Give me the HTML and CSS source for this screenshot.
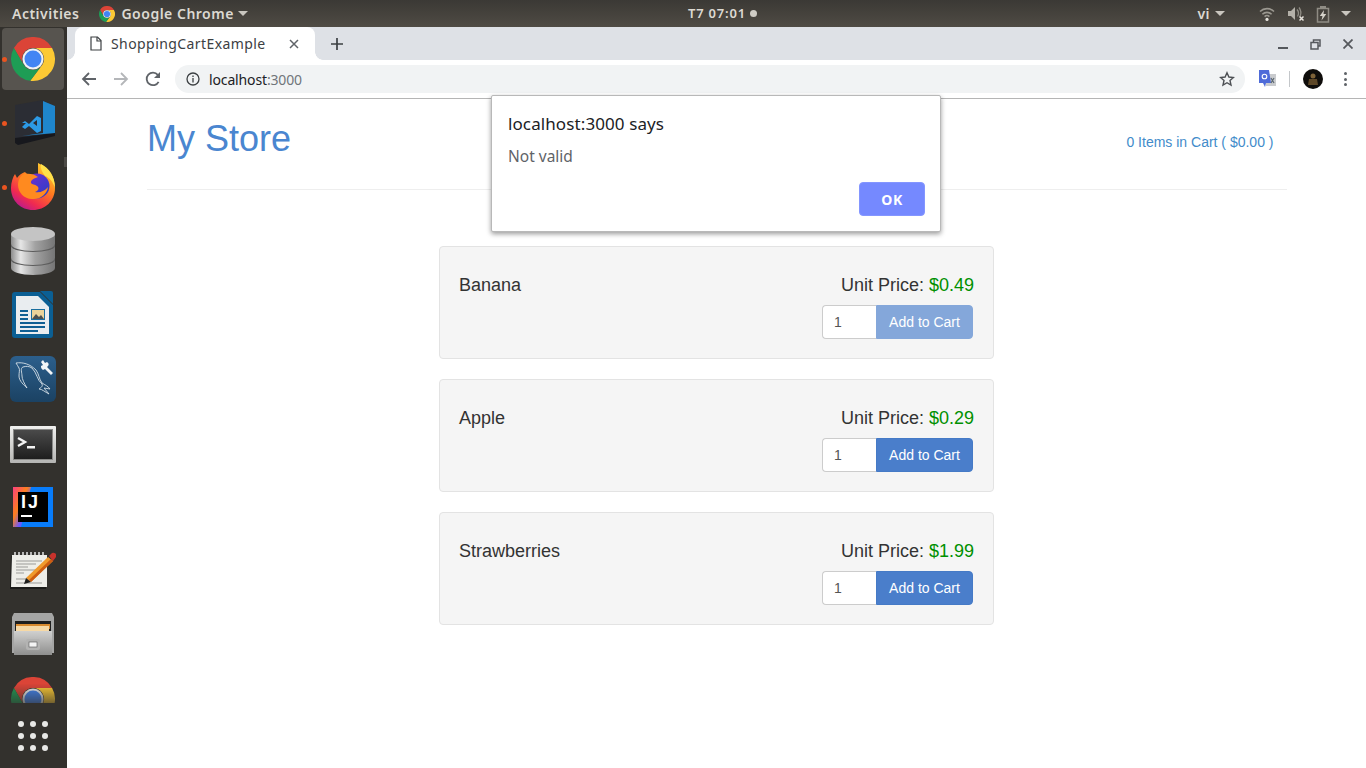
FILE: index.html
```html
<!DOCTYPE html>
<html lang="en">
<head>
<meta charset="utf-8">
<title>ShoppingCartExample</title>
<link rel="stylesheet" href="styles.css">
</head>
<body>
<svg class="defs" width="0" height="0" aria-hidden="true">
  <symbol id="chrome" viewBox="0 0 48 48">
    <path fill="#db4437" d="M3.2 12A24 24 0 0 1 44.8 12H24A12 12 0 0 0 13.6 30Z"/>
    <path fill="#fcc934" d="M44.8 12A24 24 0 0 1 21 47.8L34.4 30A12 12 0 0 0 24 12Z"/>
    <path fill="#1e9d55" d="M3.2 12A24 24 0 0 0 21 47.8L34.4 30A12 12 0 0 1 13.6 30Z"/>
    <circle cx="24" cy="24" r="11.5" fill="#f1f3f4"/>
    <circle cx="24" cy="24" r="9.3" fill="#4285f4"/>
  </symbol>
</svg>

<header class="topbar">
  <span class="top-item activities">Activities</span>
  <span class="top-item app-menu">
    <svg class="top-chrome" width="16" height="16"><use href="#chrome"/></svg>
    Google Chrome
    <i class="caret caret-app"></i>
  </span>
  <span class="clock">T7 07:01<i class="clock-dot"></i></span>
  <span class="tray">
    <span class="top-item lang">vi</span><i class="caret caret-lang"></i>
    <svg class="tray-icon wifi" width="16" height="16" viewBox="0 0 16 16" fill="none" stroke="#9b9890" stroke-width="1.6">
      <path d="M1 5.5a10 10 0 0 1 14 0"/><path d="M3.4 8.2a6.6 6.6 0 0 1 9.2 0"/><path d="M5.6 10.6a3.4 3.4 0 0 1 4.8 0"/>
      <circle cx="8" cy="13.4" r="1.6" fill="#e6e3dc" stroke="none"/>
    </svg>
    <svg class="tray-icon speaker" width="18" height="16" viewBox="0 0 18 16">
      <path fill="#b4b1a9" d="M1 5h3l4-4v13l-4-4H1z"/>
      <path fill="none" stroke="#8f8c84" stroke-width="1.3" d="M10 3.5a6 6 0 0 1 .5 7M12 1.5a9 9 0 0 1 1 9"/>
      <path stroke="#e6e3dc" stroke-width="1.5" d="M12.5 10.5l4 4M16.5 10.5l-4 4"/>
    </svg>
    <svg class="tray-icon battery" width="14" height="18" viewBox="0 0 14 18">
      <path fill="none" stroke="#8f8c84" stroke-width="1.5" d="M1.5 3.5h11v13.500h-11z"/>
      <path fill="#8f8c84" d="M4 1h6v2.500H4z"/>
      <path fill="#d5d2ca" d="M8 5L3.800 11H6.500L5.500 15.500 10.300 9H7.500z"/>
    </svg>
    <i class="caret caret-end"></i>
  </span>
</header>

<div class="desktop">
  <nav class="dock">
    <div class="dock-list">
      <div class="dock-item active running">
        <svg width="44" height="44"><use href="#chrome"/></svg>
      </div>
      <div class="dock-item running">
        <svg width="46" height="46" viewBox="0 0 46 46">
          <path fill="#2b2d34" d="M5 5 33 0l12 6v27L8 45l-3-3z"/>
          <path fill="#17181d" d="M5 38l40-5v3L8 45l-3-2z"/>
          <path fill="#1f86cc" d="M33 1l12 5v27l-33 3 21-3z"/>
          <path fill="#2c9ae6" d="M12 23l3-2 4 3 8-8 4 2v13l-4 2-8-7-4 3-3-2 4-4zM23 23l4 3v-6z"/>
        </svg>
      </div>
      <div class="dock-item running">
        <svg width="46" height="48" viewBox="0 0 46 48">
          <defs>
            <linearGradient id="fx" x1="0.800" y1="0.050" x2="0.200" y2="1">
              <stop offset="0" stop-color="#ffcf30"/><stop offset=".4" stop-color="#ff7a1f"/><stop offset=".75" stop-color="#f02a50"/><stop offset="1" stop-color="#b1189a"/>
            </linearGradient>
            <linearGradient id="fxb" x1="0" y1="0" x2="1" y2="1">
              <stop offset="0" stop-color="#7a2bd0"/><stop offset="1" stop-color="#2440c8"/>
            </linearGradient>
          </defs>
          <path fill="url(#fx)" d="M28 0c9 4 17 12 17 25 0 13-10 22-22 22S1 38 1 25c0-6 2-11 4-14l2 4c2-3 5-5 8-6 2 3 8 4 13 6z"/>
          <circle cx="27" cy="23" r="12.500" fill="url(#fxb)"/>
          <path fill="#ff8a1f" d="M14 11c5-1 11 0 14 3-3 1-8 3-7 6 1 2 4 1 6 3 3 2 1 5-2 6 5 1 10-1 13-5-1 7-8 13-16 12-8 0-14-7-14-14 0-5 2-9 6-11z"/>
          <path fill="#ffe04a" d="M31 1c8 4 14 12 14 24-2-6-5-10-10-12-3-4-5-8-4-12z"/>
        </svg>
      </div>
      <div class="dock-item">
        <svg width="46" height="50" viewBox="0 0 46 50">
          <defs>
            <linearGradient id="db" x1="0" x2="1" y1="0" y2="0">
              <stop offset="0" stop-color="#8d8d8d"/><stop offset=".22" stop-color="#e6e6e6"/><stop offset=".55" stop-color="#a2a2a2"/><stop offset="1" stop-color="#757575"/>
            </linearGradient>
          </defs>
          <path fill="url(#db)" d="M1 34h44v8c0 4-10 7-22 7S1 46 1 42z"/>
          <ellipse cx="23" cy="34" rx="22" ry="6" fill="#5d5d5d"/>
          <path fill="url(#db)" d="M1 20h44v12c0 4-10 7-22 7S1 36 1 32z"/>
          <ellipse cx="23" cy="20" rx="22" ry="6" fill="#5d5d5d"/>
          <path fill="url(#db)" d="M1 8h44v10c0 4-10 7-22 7S1 22 1 18z"/>
          <ellipse cx="23" cy="8" rx="22" ry="7" fill="#c4c4c4"/>
        </svg>
      </div>
      <div class="dock-item">
        <svg width="42" height="48" viewBox="0 0 42 48">
          <path fill="#0b5f94" d="M3 1h25l13 13v30a3 3 0 0 1-3 3H3a3 3 0 0 1-3-3V4a3 3 0 0 1 3-3z"/>
          <path fill="#e9edf0" d="M4 5h22l11 11v27H4z"/>
          <path fill="#0b5f94" d="M28 0h11a2 2 0 0 1 2 2v11z"/>
          <path fill="#0f5f93" d="M8 19h8v2H8zM8 23h8v2H8zM8 27h8v2H8zM8 31h25v2H8zM8 35h25v2H8zM8 39h18v2H8z"/>
          <path fill="#1a6e9e" d="M19 18h14v11H19z"/>
          <path fill="#e9d39a" d="M20 19h12v9H20z"/>
          <path fill="#4a4f4f" d="M20 28l4-5 3 3 2-2 3 4z"/>
        </svg>
      </div>
      <div class="dock-item">
        <svg width="46" height="46" viewBox="0 0 46 46">
          <defs>
            <linearGradient id="wb" x1="0" x2="0" y1="0" y2="1">
              <stop offset="0" stop-color="#2c5f8c"/><stop offset="1" stop-color="#1b4263"/>
            </linearGradient>
          </defs>
          <rect width="46" height="46" rx="6" fill="url(#wb)"/>
          <path fill="none" stroke="#d5e0e8" stroke-width=".9" d="M6 7c7-1 14 1 20 7 3 4 3 9 6 13 3 2 6 3 8 6l-6-1 5 6c-4-2-7-5-10-5 2-2 4-2 3-5-5-4-5-11-10-16-3-2-6-2-9-1-3 1-1 6-1 9 0 3 2 7 5 12-3-3-8-7-8-12 0-4 1-6 0-8-1-2-2-3-3-5z"/>
          <path fill="#f2f5f7" d="M33 4l2 3 2-1c2 1 2 3 1 4l-1 1 6 6-2 2-6-6-2 1c-2-1-2-3-2-4l2-1-2-3z"/>
        </svg>
      </div>
      <div class="dock-item">
        <svg class="term-icon" width="46" height="37" viewBox="0 0 46 37">
          <defs>
            <linearGradient id="tb" x1="0" x2="0" y1="0" y2="1">
              <stop offset="0" stop-color="#f0f0ee"/><stop offset="1" stop-color="#b5b5b3"/>
            </linearGradient>
            <linearGradient id="ts" x1="0" x2="0" y1="0" y2="1">
              <stop offset="0" stop-color="#4a4a4a"/><stop offset="1" stop-color="#1e1e1e"/>
            </linearGradient>
          </defs>
          <rect width="46" height="37" rx="1" fill="url(#tb)"/>
          <rect x="3" y="3" width="40" height="31" fill="#8a8a88"/>
          <rect x="4" y="4" width="38" height="29" fill="url(#ts)"/>
          <path fill="none" stroke="#f4f4f4" stroke-width="2.400" d="M8 12l7 4-7 4"/>
          <path fill="#f4f4f4" d="M17 20h8v2.500h-8z"/>
        </svg>
      </div>
      <div class="dock-item">
        <svg width="40" height="40" viewBox="0 0 40 40">
          <defs>
            <linearGradient id="ij" x1="0" y1="0" x2="1" y2="1">
              <stop offset="0" stop-color="#fc3f7f"/><stop offset=".4" stop-color="#fc801d"/><stop offset=".65" stop-color="#6b57ff"/><stop offset="1" stop-color="#087cfa"/>
            </linearGradient>
          </defs>
          <rect width="40" height="40" fill="#087cfa"/>
          <path fill="url(#ij)" d="M0 0h18L8 40H0z"/>
          <rect x="5" y="5" width="30" height="30" fill="#000"/>
          <text class="ij-text" x="8" y="21">IJ</text>
          <rect x="8" y="28" width="11" height="2" fill="#fff"/>
        </svg>
      </div>
      <div class="dock-item">
        <svg width="46" height="38" viewBox="0 0 46 38">
          <path fill="#1c1c1a" d="M1 4h35v33H0z"/>
          <path fill="#eeeee9" d="M2 3h35v32H1z"/>
          <g fill="none" stroke="#e6e6e6" stroke-width="1.500">
            <path d="M5 3V0M9 3V0M13 3V0M17 3V0M21 3V0M25 3V0M29 3V0M33 3V0"/>
          </g>
          <path stroke="#9b9b98" stroke-width="1" d="M6 9h26M6 12h20M6 15h12M6 18h26M6 21h8M6 27h14M6 31h26"/>
          <path fill="#f09a2c" d="M38 5l5 4-22 21-5-4z"/>
          <path fill="#ce5d12" d="M43 9l-22 21-2-2 22-21z"/>
          <path fill="#c8322c" d="M39 4l3-3a3 3 0 0 1 4 4l-3 4z"/>
          <path fill="#1d1d1b" d="M16 26l5 4-7 2z"/>
        </svg>
      </div>
      <div class="dock-item">
        <svg width="42" height="44" viewBox="0 0 42 44">
          <defs>
            <linearGradient id="cab" x1="0" x2="0" y1="0" y2="1">
              <stop offset="0" stop-color="#d0d0cf"/><stop offset="1" stop-color="#8f8f8e"/>
            </linearGradient>
          </defs>
          <path fill="#a5a5a4" d="M2 0h38l2 4v36H0V4z"/>
          <rect x="3" y="8" width="36" height="10" fill="#1f1f1e"/>
          <rect x="4" y="11" width="34" height="5" fill="#d98a2e"/>
          <rect x="4" y="13" width="33" height="5" fill="#f7d9a5"/>
          <path fill="url(#cab)" d="M2 18h38v24H2z"/>
          <rect x="14" y="26" width="14" height="11" rx="2" fill="#b3b3b2"/>
          <rect x="17" y="29" width="8" height="5" fill="#f4f4f4" stroke="#555" stroke-width=".6"/>
        </svg>
      </div>
      <div class="dock-item">
        <svg class="faded" width="44" height="44"><use href="#chrome"/></svg>
      </div>
    </div>
    <div class="apps-grid">
      <i></i><i></i><i></i><i></i><i></i><i></i><i></i><i></i><i></i>
    </div>
    <i class="dock-hint"></i>
  </nav>

  <main class="browser">
    <div class="tabstrip">
      <div class="tab">
        <svg class="tab-file" width="12" height="15" viewBox="0 0 12 15" fill="none" stroke="#3c4043" stroke-width="1.200">
          <path d="M1 1h6.500L11 4.500V14H1z"/><path d="M7 1v4h4"/>
        </svg>
        <span class="tab-title">ShoppingCartExample</span>
        <svg class="tab-close" width="10" height="10" viewBox="0 0 10 10" stroke="#5f6368" stroke-width="1.500"><path d="M1 1l8 8M9 1l-8 8"/></svg>
      </div>
      <svg class="new-tab" width="12" height="12" viewBox="0 0 12 12" stroke="#3c4043" stroke-width="1.700"><path d="M6 0v12M0 6h12"/></svg>
      <div class="window-controls">
        <svg width="10" height="10" viewBox="0 0 10 10"><path fill="#55585d" d="M0 8h10v2H0z"/></svg>
        <svg width="11" height="11" viewBox="0 0 11 11" fill="none" stroke="#55585d" stroke-width="1.500"><path d="M3.500 3V1h6.500v6H8"/><path d="M1 3.500h7v6.500H1z"/></svg>
        <svg width="10" height="10" viewBox="0 0 10 10" stroke="#55585d" stroke-width="1.800"><path d="M.5.5l9 9M9.500.5l-9 9"/></svg>
      </div>
    </div>

    <div class="toolbar">
      <svg class="nav-icon" width="16" height="16" viewBox="0 0 16 16" fill="none" stroke="#5f6368" stroke-width="1.800"><path d="M15 8H2M8 2L2 8l6 6"/></svg>
      <svg class="nav-icon" width="16" height="16" viewBox="0 0 16 16" fill="none" stroke="#b4b6b9" stroke-width="1.800"><path d="M1 8h13M8 2l6 6-6 6"/></svg>
      <svg class="nav-icon reload" width="16" height="16" viewBox="0 0 16 16" fill="none" stroke="#5f6368" stroke-width="1.800"><path d="M13.600 10.800A6.300 6.300 0 1 1 12.800 3.800"/><path fill="#5f6368" stroke="none" d="M15 1v6H9z"/></svg>
      <div class="omnibox">
        <svg class="info-icon" width="14" height="14" viewBox="0 0 14 14" fill="none" stroke="#3c4043" stroke-width="1.300"><circle cx="7" cy="7" r="6"/><path d="M7 6v4.500M7 3.400v1.500"/></svg>
        <span class="url">localhost<span class="url-port">:3000</span></span>
        <svg class="star" width="16" height="16" viewBox="0 0 16 16" fill="none" stroke="#4d5054" stroke-width="1.400"><path d="M8 1.800l1.900 4.200 4.500.5-3.400 3 1 4.500L8 11.700 4 14l1-4.500-3.400-3 4.500-.5z"/></svg>
      </div>
      <svg class="translate" width="17" height="18" viewBox="0 0 17 18">
        <path fill="#c9cbce" d="M7 4h10v12H7z"/>
        <path fill="#4f6bd8" d="M0 0h10l2 13H7l-1 4-2-4H0z"/>
        <circle cx="5.500" cy="6.500" r="2.300" fill="none" stroke="#fff" stroke-width="1.100"/>
        <path stroke="#5b6770" stroke-width="1.200" d="M12 8l3 5M15 8l-3 5"/>
      </svg>
      <i class="tool-sep"></i>
      <svg class="avatar" width="20" height="20" viewBox="0 0 20 20">
        <circle cx="10" cy="10" r="10" fill="#0f0d0b"/>
        <circle cx="10" cy="7" r="2.500" fill="#7d6238"/>
        <path fill="#5d4727" d="M6 10h8l1 6H5z"/>
      </svg>
      <span class="kebab"><i></i><i></i><i></i></span>
    </div>

    <div class="page">
      <div class="container">
        <div class="store-header">
          <h1 class="store-title">My Store</h1>
          <a class="cart-link">0 Items in Cart ( $0.00 )</a>
        </div>
        <div class="product-list">
          <section class="well">
            <span class="product-name">Banana</span>
            <div class="product-buy">
              <div class="price">Unit Price: <span class="price-value">$0.49</span></div>
              <div class="input-group">
                <input class="qty" type="text" value="1">
                <button class="add-btn disabled">Add to Cart</button>
              </div>
            </div>
          </section>
          <section class="well">
            <span class="product-name">Apple</span>
            <div class="product-buy">
              <div class="price">Unit Price: <span class="price-value">$0.29</span></div>
              <div class="input-group">
                <input class="qty" type="text" value="1">
                <button class="add-btn">Add to Cart</button>
              </div>
            </div>
          </section>
          <section class="well">
            <span class="product-name">Strawberries</span>
            <div class="product-buy">
              <div class="price">Unit Price: <span class="price-value">$1.99</span></div>
              <div class="input-group">
                <input class="qty" type="text" value="1">
                <button class="add-btn">Add to Cart</button>
              </div>
            </div>
          </section>
        </div>
      </div>
    </div>

    <div class="alert-dialog">
      <div class="alert-title">localhost:3000 says</div>
      <div class="alert-message">Not valid</div>
      <div class="alert-actions"><button class="alert-ok">OK</button></div>
    </div>
  </main>
</div>
</body>
</html>
```
FILE: styles.css
```css
* { box-sizing: border-box; }
html, body { margin: 0; padding: 0; }
body {
  width: 1366px;
  height: 768px;
  overflow: hidden;
  display: flex;
  flex-direction: column;
  font-family: "Liberation Sans", Arial, sans-serif;
  background: #fff;
}
.defs { position: absolute; }
i { display: block; font-style: normal; }
svg { display: block; flex: none; }

/* top bar */
.topbar {
  height: 27px;
  flex: none;
  display: flex;
  align-items: center;
  position: relative;
  background: linear-gradient(#3b3935, #4f4b44);
  color: #dcd9d2;
  font-family: "Noto Sans", sans-serif;
  font-weight: 600;
  font-size: 14px;
  letter-spacing: .5px;
  padding-left: 12px;
}
.top-item { display: flex; align-items: center; white-space: nowrap; }
.activities { margin-right: 20px; }
.top-chrome { margin-right: 6px; }
.caret {
  width: 0; height: 0;
  border-left: 5px solid transparent;
  border-right: 5px solid transparent;
  border-top: 5px solid #c9c6bf;
  margin-left: 6px;
}
.caret-app { margin-left: 4px; }
.clock {
  position: absolute;
  left: 688px;
  top: 4px;
  display: flex;
  align-items: center;
  font-size: 13px;
  line-height: 18px;
  letter-spacing: .8px;
}
.clock-dot { width: 7px; height: 7px; border-radius: 50%; background: #cfccc5; margin-left: 4px; }
.tray { margin-left: auto; display: flex; align-items: center; padding-right: 15px; }
.caret-lang { margin-left: 5px; margin-right: 34px; }
.tray-icon { margin-right: 12px; }
.wifi { margin-right: 12px; }
.speaker { margin-right: 11px; }
.battery { margin-right: 11px; }
.caret-end { margin-left: 0; }

/* desktop */
.desktop { flex: 1; display: flex; min-height: 0; }

/* dock */
.dock {
  width: 67px;
  flex: none;
  background: #33312d;
  display: flex;
  flex-direction: column;
  overflow: hidden;
  position: relative;
}
.dock-hint {
  position: absolute;
  right: 0;
  top: 130px;
  width: 3px;
  height: 10px;
  background: #4c4a46;
}
.dock-list { height: 676px; overflow: hidden; flex: none; }
.dock-item {
  height: 64px;
  width: 62px;
  margin-left: 2px;
  display: flex;
  align-items: center;
  justify-content: center;
  border-radius: 4px;
  position: relative;
}
.dock-item.active { background: #57544f; margin-top: 1px; height: 62px; margin-bottom: 1px; }
.dock-item.running::before {
  content: "";
  position: absolute;
  left: 0;
  top: 50%;
  width: 5px;
  height: 5px;
  margin-top: -2px;
  border-radius: 50%;
  background: #e95420;
}
.term-icon { margin-top: 2px; }
.faded {
  -webkit-mask-image: linear-gradient(rgba(0, 0, 0, 1) 15%, rgba(0, 0, 0, .35) 58%);
  mask-image: linear-gradient(rgba(0, 0, 0, 1) 15%, rgba(0, 0, 0, .35) 58%);
}
.ij-text { font-family: "Liberation Sans", sans-serif; font-weight: 700; font-size: 18px; letter-spacing: 2px; fill: #fff; }
.apps-grid {
  display: grid;
  grid-template-columns: repeat(3, 6px);
  gap: 6px;
  margin: 18px 0 0 18px;
}
.apps-grid i { width: 6px; height: 6px; border-radius: 50%; background: #e8e8e6; }

/* browser */
.browser { flex: 1; min-width: 0; display: flex; flex-direction: column; position: relative; }
.tabstrip {
  height: 33px;
  flex: none;
  background: #dee1e6;
  display: flex;
  align-items: flex-start;
  padding-left: 8px;
}
.tab {
  width: 240px;
  height: 33px;
  background: #fff;
  border-radius: 8px 8px 0 0;
  display: flex;
  align-items: center;
  padding: 0 16px 0 15px;
  position: relative;
}
.tab::before, .tab::after {
  content: "";
  position: absolute;
  bottom: 0;
  width: 8px;
  height: 8px;
}
.tab::before { left: -8px; background: radial-gradient(circle at 0 0, transparent 7.5px, #fff 8px); }
.tab::after { right: -8px; background: radial-gradient(circle at 100% 0, transparent 7.5px, #fff 8px); }
.tab-file { margin-right: 9px; }
.tab-title {
  font-family: "Noto Sans", sans-serif;
  font-size: 14px;
  letter-spacing: .42px;
  color: #3c4043;
  flex: 1;
  white-space: nowrap;
}
.new-tab { margin: 11px 0 0 16px; }
.window-controls {
  margin-left: auto;
  display: flex;
  align-items: flex-start;
  gap: 22px;
  margin-top: 12px;
  padding-right: 13px;
}

.toolbar {
  height: 39px;
  flex: none;
  background: #fff;
  border-bottom: 1px solid #b5b5b5;
  display: flex;
  align-items: center;
  padding-left: 14px;
  position: relative;
}
.nav-icon { margin-right: 16px; }
.nav-icon.reload { margin-right: 14px; }
.omnibox {
  width: 1070px;
  height: 28px;
  border-radius: 14px;
  background: #f1f3f4;
  display: flex;
  align-items: center;
  padding: 0 10px 0 11px;
}
.info-icon { margin-right: 9px; }
.url {
  font-family: "Noto Sans", sans-serif;
  font-size: 14px;
  letter-spacing: -.14px;
  color: #202124;
  flex: 1;
}
.url-port { color: #70757a; }
.translate { margin-left: 14px; }
.tool-sep { width: 1px; height: 16px; background: #c4c7ca; margin-left: 13px; }
.avatar { margin-left: 13px; }
.kebab { margin-left: 21px; display: flex; flex-direction: column; gap: 2.5px; }
.kebab i { width: 3px; height: 3px; border-radius: 50%; background: #5f6368; }

/* page */
.page { flex: 1; background: #fff; min-height: 0; }
.container { width: 1140px; margin-left: 80px; }
.store-header {
  height: 91px;
  border-bottom: 1px solid #eee;
  display: flex;
  justify-content: space-between;
  align-items: flex-start;
  padding-right: 13.5px;
}
.store-title {
  margin: 20px 0 0;
  font-size: 36px;
  line-height: 40px;
  font-weight: 400;
  color: #4a86d0;
}
.cart-link { margin-top: 33px; font-size: 14px; line-height: 20px; color: #428bca; }

.product-list {
  width: 555px;
  margin: 56px 0 0 292px;
  display: flex;
  flex-direction: column;
  gap: 20px;
}
.well {
  height: 113px;
  background: #f5f5f5;
  border: 1px solid #e3e3e3;
  border-radius: 4px;
  padding: 20px 19px 0 19px;
  display: flex;
  justify-content: space-between;
  align-items: flex-start;
  color: #333;
}
.product-name { font-size: 18px; line-height: 37px; }
.product-buy { display: flex; flex-direction: column; align-items: flex-end; }
.price { font-size: 18px; line-height: 36px; margin-bottom: 2px; }
.price-value { color: #009000; }
.input-group { display: flex; height: 34px; margin-right: 1px; }
.qty {
  width: 54px;
  height: 34px;
  padding: 6px 11px;
  font: 14px "Liberation Sans", sans-serif;
  color: #555;
  background: #fff;
  border: 1px solid #ccc;
  border-right: 0;
  border-radius: 4px 0 0 4px;
  outline: none;
}
.add-btn {
  width: 97px;
  height: 34px;
  padding: 0;
  font: 14px "Liberation Sans", sans-serif;
  color: #fff;
  background: #4a7ecb;
  border: 1px solid #457ac6;
  border-radius: 0 4px 4px 0;
}
.add-btn.disabled { background: #84a7da; border-color: #84a7da; }

/* alert */
.alert-dialog {
  position: absolute;
  left: 424px;
  top: 68px;
  width: 450px;
  height: 137px;
  background: #fff;
  border: 1px solid #b8b8b8;
  border-radius: 2px;
  box-shadow: 0 2px 5px rgba(0, 0, 0, .4);
  padding: 16px 15px 0 16px;
  font-family: "Noto Sans", sans-serif;
}
.alert-title { font-size: 17px; line-height: 24px; letter-spacing: .1px; color: #202124; }
.alert-message { font-size: 15.5px; line-height: 20px; margin-top: 10px; color: #5f6368; }
.alert-actions { display: flex; justify-content: flex-end; margin-top: 16px; }
.alert-ok {
  width: 66px;
  height: 34px;
  background: #7589ff;
  border: 1px solid #8496ff;
  border-radius: 4px;
  color: #fff;
  font: 700 14px "Noto Sans", sans-serif;
  letter-spacing: .5px;
  padding: 0;
}
```
